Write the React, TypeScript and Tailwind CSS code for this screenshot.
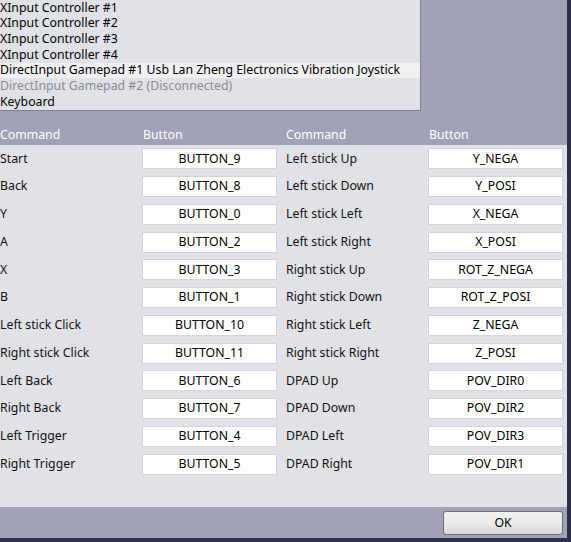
import React from "react";

const devices = [
  { name: "XInput Controller #1" },
  { name: "XInput Controller #2" },
  { name: "XInput Controller #3" },
  { name: "XInput Controller #4" },
  { name: "DirectInput Gamepad #1 Usb Lan Zheng Electronics Vibration Joystick", selected: true },
  { name: "DirectInput Gamepad #2 (Disconnected)", disabled: true },
  { name: "Keyboard" },
];

const bindings: [string, string, string, string][] = [
  ["Start", "BUTTON_9", "Left stick Up", "Y_NEGA"],
  ["Back", "BUTTON_8", "Left stick Down", "Y_POSI"],
  ["Y", "BUTTON_0", "Left stick Left", "X_NEGA"],
  ["A", "BUTTON_2", "Left stick Right", "X_POSI"],
  ["X", "BUTTON_3", "Right stick Up", "ROT_Z_NEGA"],
  ["B", "BUTTON_1", "Right stick Down", "ROT_Z_POSI"],
  ["Left stick Click", "BUTTON_10", "Right stick Left", "Z_NEGA"],
  ["Right stick Click", "BUTTON_11", "Right stick Right", "Z_POSI"],
  ["Left Back", "BUTTON_6", "DPAD Up", "POV_DIR0"],
  ["Right Back", "BUTTON_7", "DPAD Down", "POV_DIR2"],
  ["Left Trigger", "BUTTON_4", "DPAD Left", "POV_DIR3"],
  ["Right Trigger", "BUTTON_5", "DPAD Right", "POV_DIR1"],
];

function KeyBox({ value }: { value: string }) {
  return (
    <div className="my-[3px] flex h-[21px] items-center justify-center border border-[#d3d4dc] bg-white text-black">
      {value}
    </div>
  );
}

export default function App() {
  return (
    <div
      className="h-[542px] w-[571px] overflow-hidden border-b-[4px] border-r-[4px] border-[#2b3148] bg-[#a1a1b7] text-[12.3px] text-[#111]"
      style={{ fontFamily: '"Noto Sans", "Open Sans", sans-serif' }}
    >
      <div className="flex h-full flex-col">
        {/* device list */}
        <div className="h-[111px] w-[421px] border-b border-r border-[#80808e] bg-[#e1e2e8]">
          {devices.map((d) => (
            <div
              key={d.name}
              className={`flex h-[15.7px] items-center whitespace-nowrap leading-none ${
                d.selected ? "bg-[#f1f1f3]" : ""
              } ${d.disabled ? "text-[#8c8c90]" : "text-black"}`}
            >
              {d.name}
            </div>
          ))}
        </div>

        {/* column headers */}
        <div className="mt-[15px] grid h-[19px] grid-cols-[142px_135px_151px_135px] items-center text-white">
          <div>Command</div>
          <div className="pl-px">Button</div>
          <div className="pl-[9px]">Command</div>
          <div className="pl-px">Button</div>
        </div>

        {/* bindings */}
        <div className="h-[362px] w-[567px] bg-[#e1e2e8]">
          {bindings.map(([c1, b1, c2, b2]) => (
            <div key={c1} className="grid h-[27.75px] grid-cols-[142px_135px_151px_135px] items-center">
              <div className="whitespace-nowrap">{c1}</div>
              <KeyBox value={b1} />
              <div className="whitespace-nowrap pl-[9px]">{c2}</div>
              <KeyBox value={b2} />
            </div>
          ))}
        </div>

        {/* footer */}
        <div className="flex flex-1 justify-end pr-[4px] pt-[4px]">
          <button className="h-[24px] w-[120px] rounded-[3px] border border-[#707070] bg-gradient-to-b from-[#f2f2f2] via-[#ebebeb] to-[#d8d8d8] text-black">
            OK
          </button>
        </div>
      </div>
    </div>
  );
}
